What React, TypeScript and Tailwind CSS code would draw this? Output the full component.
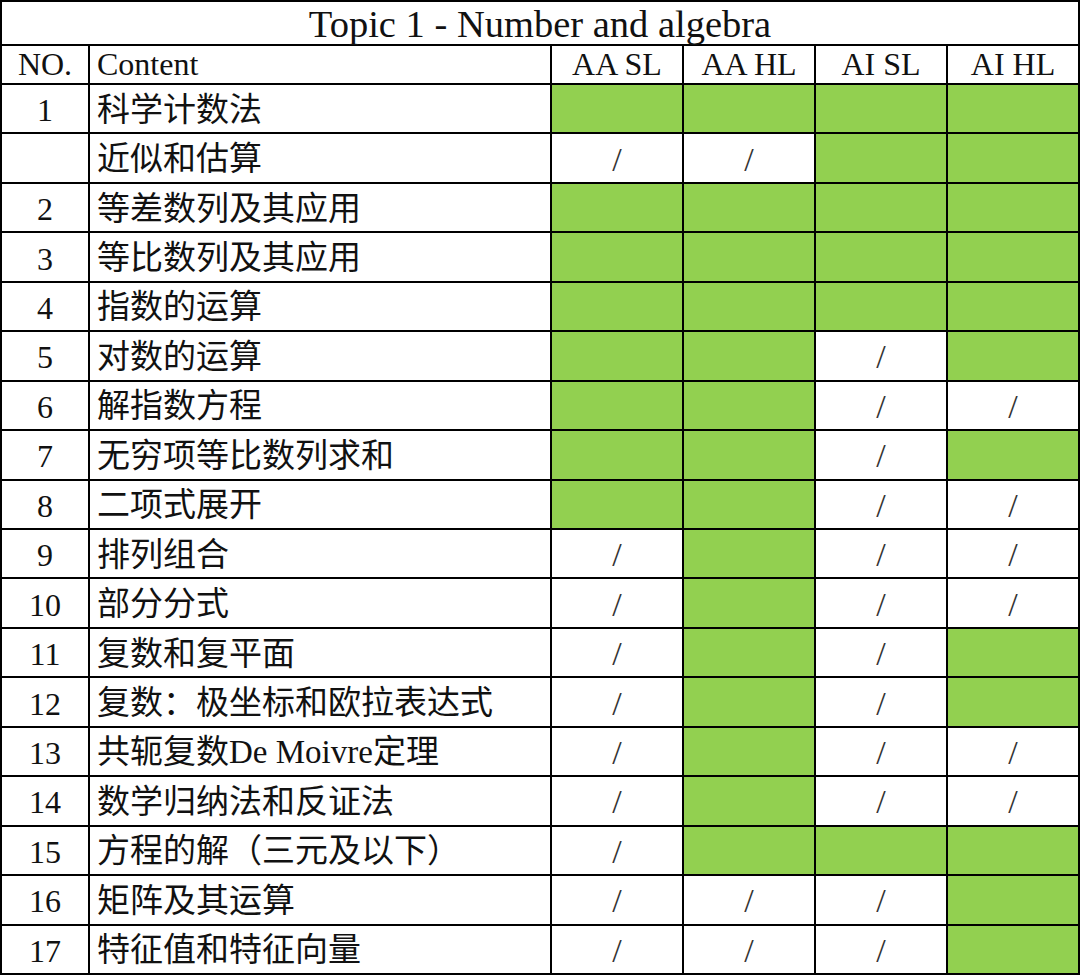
type Mark = 'G' | '/';

const rows: { no: string; content: string; marks: Mark[] }[] = [
  { no: '1', content: '科学计数法', marks: ['G', 'G', 'G', 'G'] },
  { no: '', content: '近似和估算', marks: ['/', '/', 'G', 'G'] },
  { no: '2', content: '等差数列及其应用', marks: ['G', 'G', 'G', 'G'] },
  { no: '3', content: '等比数列及其应用', marks: ['G', 'G', 'G', 'G'] },
  { no: '4', content: '指数的运算', marks: ['G', 'G', 'G', 'G'] },
  { no: '5', content: '对数的运算', marks: ['G', 'G', '/', 'G'] },
  { no: '6', content: '解指数方程', marks: ['G', 'G', '/', '/'] },
  { no: '7', content: '无穷项等比数列求和', marks: ['G', 'G', '/', 'G'] },
  { no: '8', content: '二项式展开', marks: ['G', 'G', '/', '/'] },
  { no: '9', content: '排列组合', marks: ['/', 'G', '/', '/'] },
  { no: '10', content: '部分分式', marks: ['/', 'G', '/', '/'] },
  { no: '11', content: '复数和复平面', marks: ['/', 'G', '/', 'G'] },
  { no: '12', content: '复数：极坐标和欧拉表达式', marks: ['/', 'G', '/', 'G'] },
  { no: '13', content: '共轭复数De Moivre定理', marks: ['/', 'G', '/', '/'] },
  { no: '14', content: '数学归纳法和反证法', marks: ['/', 'G', '/', '/'] },
  { no: '15', content: '方程的解（三元及以下）', marks: ['/', 'G', 'G', 'G'] },
  { no: '16', content: '矩阵及其运算', marks: ['/', '/', '/', 'G'] },
  { no: '17', content: '特征值和特征向量', marks: ['/', '/', '/', 'G'] },
];

const levels = ['AA SL', 'AA HL', 'AI SL', 'AI HL'];

export default function App() {
  return (
    <div
      className="w-[1080px] h-[975px] bg-black p-[2px] grid gap-[2px] grid-cols-[86px_460px_130px_130px_130px_130px] grid-rows-[42px_37px_repeat(18,1fr)] text-[#111] leading-none"
      style={{ fontFamily: '"Liberation Serif", "Noto Sans CJK SC", serif' }}
    >
      <div className="col-span-6 bg-white flex items-center justify-center text-[38.5px] pt-[3px]">
        Topic 1 - Number and algebra
      </div>

      <div className="bg-white flex items-end justify-center pb-[3px] text-[32px]">NO.</div>
      <div className="bg-white flex items-end pl-[7px] pb-[3px] text-[32px]">Content</div>
      {levels.map(l => (
        <div key={l} className="bg-white flex items-end justify-center pb-[3px] text-[32px]">{l}</div>
      ))}

      {rows.map((r, i) => (
        <Row key={i} {...r} />
      ))}
    </div>
  );
}

function Row({ no, content, marks }: { no: string; content: string; marks: Mark[] }) {
  return (
    <>
      <div className="bg-white flex items-center justify-center text-[32px] pt-[3px]">{no}</div>
      <div className="bg-white flex items-center pl-[7px] text-[33px] whitespace-nowrap pt-[3px]">{content}</div>
      {marks.map((m, j) =>
        m === 'G' ? (
          <div key={j} className="bg-[#92d050]" />
        ) : (
          <div key={j} className="bg-white flex items-center justify-center text-[34px] text-[#333] pt-[3px]">/</div>
        )
      )}
    </>
  );
}
